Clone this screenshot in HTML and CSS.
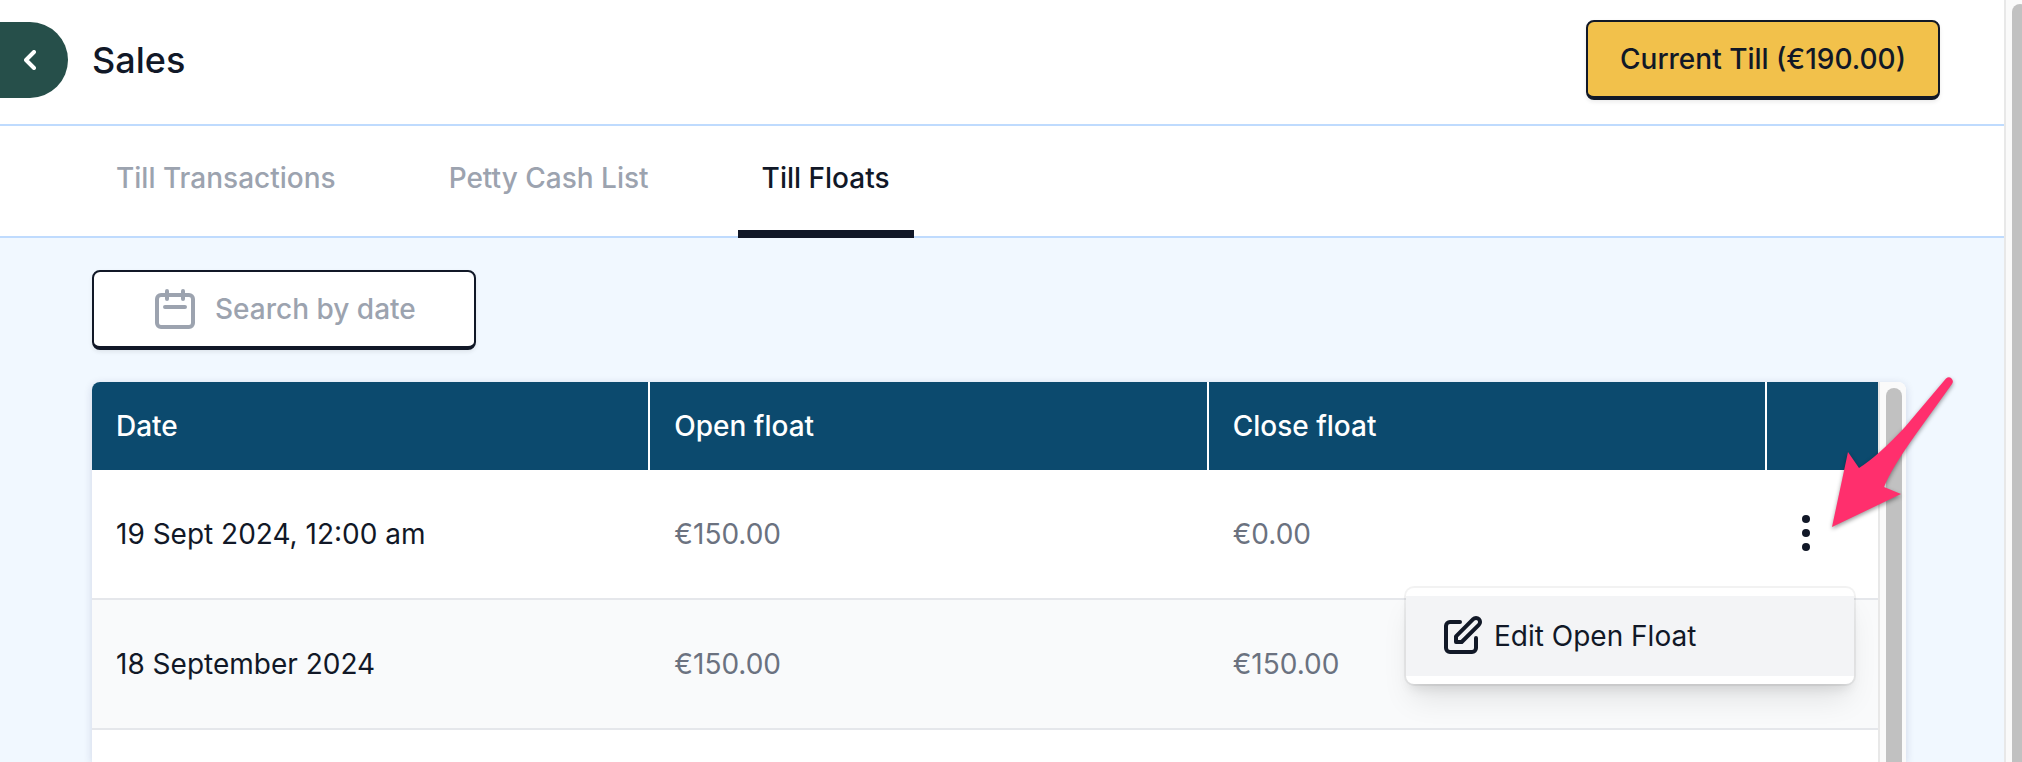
FILE: index.html
```html
<!DOCTYPE html>
<html lang="en">
<head>
	<meta charset="utf-8">
	<meta name="viewport" content="width=device-width, initial-scale=1">
	<title>Sales</title>
	<link rel="stylesheet" href="styles.css">
</head>
<body>
<div class="page">
	<header class="header">
		<button class="back" type="button" aria-label="Back">
			<svg width="12" height="20" viewBox="0 0 12 20" fill="none" stroke="currentColor" stroke-width="4" stroke-linecap="round" stroke-linejoin="round"><path d="M10 2L2 10l8 8"/></svg>
		</button>
		<h1 class="title">Sales</h1>
		<button class="btn btn-till" type="button">Current Till (€190.00)</button>
	</header>
	<nav class="tabs">
		<a class="tab" href="#transactions">Till Transactions</a>
		<a class="tab" href="#petty-cash">Petty Cash List</a>
		<a class="tab active" href="#floats">Till Floats</a>
	</nav>
	<main class="content">
		<label class="btn search">
			<svg width="40" height="40" viewBox="0 0 40 40" fill="none" stroke="currentColor" stroke-width="4" stroke-linecap="round" stroke-linejoin="round"><rect x="2" y="6" width="36" height="32" rx="4"/><path d="M12 2v8M28 2v8M10 18h20"/></svg>
			<input class="search-input" type="text" placeholder="Search by date" aria-label="Search by date">
		</label>
		<div class="card">
			<div class="card-body">
				<table class="floats">
					<thead>
						<tr>
							<th>Date</th>
							<th>Open float</th>
							<th>Close float</th>
							<th class="col-actions"></th>
						</tr>
					</thead>
					<tbody>
						<tr>
							<td class="date">19 Sept 2024, 12:00 am</td>
							<td>€150.00</td>
							<td>€0.00</td>
							<td class="actions">
								<button class="more" type="button" aria-label="Options">
									<svg width="48" height="48" viewBox="0 0 48 48" fill="currentColor"><circle cx="24" cy="9" r="4"/><circle cx="24" cy="23" r="4"/><circle cx="24" cy="37" r="4"/></svg>
								</button>
								<div class="menu">
									<button class="menu-item" type="button">
										<svg width="48" height="48" viewBox="0 0 24 24" fill="none" stroke="currentColor" stroke-width="2" stroke-linecap="round" stroke-linejoin="round"><path d="M11 5H6a2 2 0 0 0-2 2v11a2 2 0 0 0 2 2h11a2 2 0 0 0 2-2v-5m-1.414-9.414a2 2 0 1 1 2.828 2.828L11.828 15H9v-2.828l8.586-8.586z"/></svg>
										Edit Open Float
									</button>
								</div>
								<svg class="arrow" width="130" height="160" viewBox="0 0 130 160"><path d="M2 151L18 76l11 16q19-12 46-41L116 2.500q3-2.500 5.500 0t.5 5.500L86 58Q61 93 54 111l17 7z"/></svg>
							</td>
						</tr>
						<tr>
							<td class="date">18 September 2024</td>
							<td>€150.00</td>
							<td>€150.00</td>
							<td></td>
						</tr>
						<tr>
							<td></td>
							<td></td>
							<td></td>
							<td></td>
						</tr>
					</tbody>
				</table>
			</div>
			<div class="card-scroll"><div class="thumb"></div></div>
		</div>
	</main>
</div>
<div class="page-scroll"><div class="thumb"></div></div>
</body>
</html>
```
FILE: styles.css
```css
* {
	box-sizing: border-box;
}
body {
	margin: 0;
	height: 100vh;
	display: flex;
	overflow: hidden;
	background: #fff;
	color: #111827;
	font-family: Inter, "Liberation Sans", sans-serif;
	font-size: 28px;
	line-height: 40px;
}
button, input {
	font: inherit;
	color: inherit;
}
svg {
	display: block;
	flex: none;
}
.page {
	flex: 1;
	min-width: 0;
	display: flex;
	flex-direction: column;
}

/* header */
.header {
	display: flex;
	align-items: center;
	padding: 20px 64px 24px 0;
	border-bottom: 2px solid #bfdbfe;
}
.back {
	display: flex;
	align-items: center;
	justify-content: flex-end;
	width: 68px;
	height: 76px;
	padding: 0 32px 0 0;
	border: 0;
	border-radius: 0 38px 38px 0;
	background: #264f4a;
	color: #fff;
}
.title {
	flex: 1;
	margin: 0 0 0 24px;
	font-size: 36px;
	font-weight: 500;
}
.btn {
	height: 80px;
	border: 2px solid #111827;
	border-bottom-width: 4px;
	border-radius: 8px;
	box-shadow: 0 2px 4px rgba(0, 0, 0, .08);
	font-weight: 500;
}
.btn-till {
	padding: 0 32px;
	background: #f2c14b;
}

/* tabs */
.tabs {
	display: flex;
	gap: 65px;
	height: 112px;
	padding-left: 92px;
	box-shadow: inset 0 -2px #bfdbfe;
}
.tab {
	display: flex;
	align-items: center;
	padding: 0 24px;
	border-bottom: 8px solid transparent;
	color: #9ca3af;
	font-weight: 500;
	text-decoration: none;
}
.tab.active {
	border-color: #111827;
	color: #111827;
}

.content {
	flex: 1;
	min-height: 0;
	display: flex;
	flex-direction: column;
	gap: 32px;
	padding: 32px 98px 0 92px;
	background: #f1f8ff;
	overflow: hidden;
}
.search {
	flex: none;
	display: flex;
	align-items: center;
	gap: 20px;
	width: 384px;
	padding-left: 61px;
	background: #fff;
	color: #9ca3af;
}
.search-input {
	width: 220px;
	padding: 0;
	border: 0;
	outline: 0;
	background: none;
}
.search-input::placeholder {
	color: #9ca3af;
	opacity: 1;
}

/* table */
.card {
	flex: 1;
	min-height: 0;
	display: flex;
	border-radius: 8px 8px 0 0;
	background: #fff;
	box-shadow: 0 2px 8px rgba(30, 40, 100, .16);
}
.card-body {
	flex: 1;
	min-width: 0;
}
.floats {
	width: 100%;
	table-layout: fixed;
	border-collapse: separate;
	border-spacing: 0;
}
.floats th {
	height: 88px;
	padding: 0 24px;
	border-right: 2px solid #fff;
	background: #0c4a6e;
	color: #fff;
	font-weight: 500;
	text-align: left;
}
.floats th:first-child {
	border-top-left-radius: 8px;
}
.floats .col-actions {
	width: 111px;
	border-right: 0;
}
.floats td {
	height: 130px;
	padding: 0 24px;
	border-bottom: 2px solid #e5e7eb;
	color: #6b7280;
}
.floats tr:nth-child(even) td {
	background: #f9fafb;
}
.floats .date {
	color: #111827;
}
.floats .actions {
	position: relative;
	padding: 0 48px 0 15px;
}
.more {
	display: block;
	padding: 0;
	border: 0;
	background: none;
	color: #111827;
}

/* row menu */
.menu {
	position: absolute;
	z-index: 1;
	top: 118px;
	right: 24px;
	width: 448px;
	padding: 8px 0;
	border-radius: 8px;
	background: #fff;
	box-shadow: 0 0 0 2px rgba(0, 0, 0, .05), 0 20px 30px -6px rgba(0, 0, 0, .1), 0 8px 12px -4px rgba(0, 0, 0, .1);
}
.menu-item {
	display: flex;
	align-items: center;
	gap: 8px;
	width: 100%;
	height: 80px;
	padding: 0 32px;
	border: 0;
	background: #f3f4f6;
	color: #111827;
}
.arrow {
	position: absolute;
	z-index: 2;
	top: -94px;
	left: 63px;
	fill: #ff2f6d;
	filter: drop-shadow(0 2px 2px rgba(0, 0, 0, .4));
}

/* scrollbars */
.card-scroll {
	display: flex;
	width: 28px;
	padding: 6px 4px 0 6px;
	border-left: 2px solid #e8e8e8;
	border-top-right-radius: 8px;
	background: #fafafa;
}
.thumb {
	width: 16px;
	border-radius: 8px 8px 0 0;
	background: #c1c1c1;
}
.page-scroll {
	display: flex;
	width: 18px;
	padding: 4px 0 0 6px;
	border-left: 2px solid #e8e8e8;
	background: #fafafa;
	overflow: hidden;
}
.page-scroll .thumb {
	flex: none;
}
```
